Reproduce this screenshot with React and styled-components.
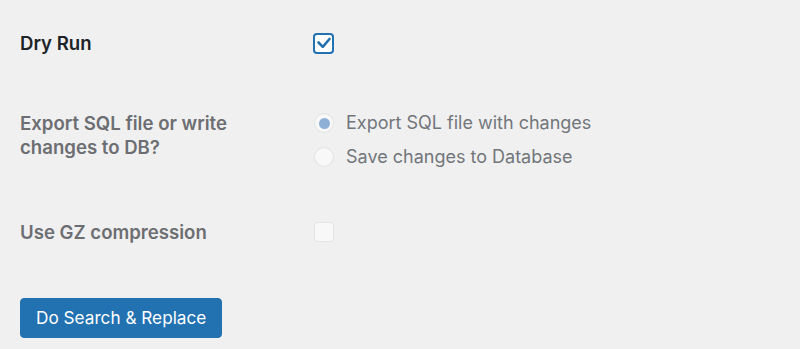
import React from 'react';
import styled, { createGlobalStyle, css } from 'styled-components';

const GlobalStyle = createGlobalStyle`
  html, body {
    margin: 0;
    padding: 0;
    background: #f0f0f1;
  }
  body {
    font-family: Inter, "Noto Sans", "Liberation Sans", sans-serif;
    -webkit-font-smoothing: antialiased;
  }
`;

const Page = styled.div`
  width: 800px;
  height: 349px;
  box-sizing: border-box;
  padding: 31px 0 0 20px;
  background: #f0f0f1;
  overflow: hidden;
`;

const Row = styled.div`
  display: grid;
  grid-template-columns: 293px 1fr;
  align-items: start;
  padding-top: ${props => props.$top || 0}px;
`;

const Label = styled.div`
  font-size: 18.6px;
  line-height: 24px;
  font-weight: 600;
  color: ${props => (props.$disabled ? '#6c6e72' : '#1d2327')};
  width: 240px;
`;

const Control = styled.div`
  display: flex;
  flex-direction: column;
  gap: 10px;
  min-height: 24px;
  justify-content: center;
`;

const boxBase = css`
  box-sizing: border-box;
  display: flex;
  align-items: center;
  justify-content: center;
  background: #fff;
`;

const CheckBox = styled.span`
  ${boxBase};
  width: 21px;
  height: 21px;
  margin-left: ${props => (props.$disabled ? '1px' : '0')};
  border-radius: 4px;
  border: 2px solid #2271b1;
  ${props =>
    props.$disabled &&
    css`
      width: 20px;
      height: 20px;
      border: 1px solid rgba(220, 220, 222, 0.75);
      background: rgba(255, 255, 255, 0.5);
    `}
`;

const Option = styled.div`
  display: flex;
  align-items: center;
  gap: 12px;
  height: 24px;
`;

const Radio = styled.span`
  ${boxBase};
  width: 20px;
  height: 20px;
  margin-left: 1px;
  border-radius: 50%;
  border: 1px solid rgba(220, 220, 222, 0.75);
  background: rgba(255, 255, 255, 0.5);

  &::after {
    content: '';
    display: ${props => (props.$checked ? 'block' : 'none')};
    width: 11px;
    height: 11px;
    border-radius: 50%;
    background: #8eb0d8;
  }
`;

const OptionText = styled.span`
  font-size: 18px;
  line-height: 24px;
  color: #72767b;
`;

const Button = styled.button`
  margin-top: 54px;
  height: 40px;
  padding: 0 15px;
  border: 1px solid #2271b1;
  border-radius: 4px;
  background: #2271b1;
  color: #fff;
  font-family: inherit;
  font-size: 17.2px;
  line-height: 24px;
  cursor: pointer;
`;

function Check() {
  return (
    <svg width="17" height="17" viewBox="0 0 17 17" fill="none">
      <polyline
        points="3.5,7.5 7.8,11.8 14.5,4"
        stroke="#2271b1"
        strokeWidth="2.6"
        strokeLinecap="round"
        strokeLinejoin="round"
      />
    </svg>
  );
}

export default function App() {
  return (
    <Page>
      <GlobalStyle />
      <Row>
        <Label>Dry Run</Label>
        <Control>
          <CheckBox>
            <Check />
          </CheckBox>
        </Control>
      </Row>
      <Row $top={56}>
        <Label $disabled>Export SQL file or write changes to DB?</Label>
        <Control>
          <Option>
            <Radio $checked />
            <OptionText>Export SQL file with changes</OptionText>
          </Option>
          <Option>
            <Radio />
            <OptionText>Save changes to Database</OptionText>
          </Option>
        </Control>
      </Row>
      <Row $top={51}>
        <Label $disabled>Use GZ compression</Label>
        <Control>
          <CheckBox $disabled />
        </Control>
      </Row>
      <Button>Do Search &amp; Replace</Button>
    </Page>
  );
}
